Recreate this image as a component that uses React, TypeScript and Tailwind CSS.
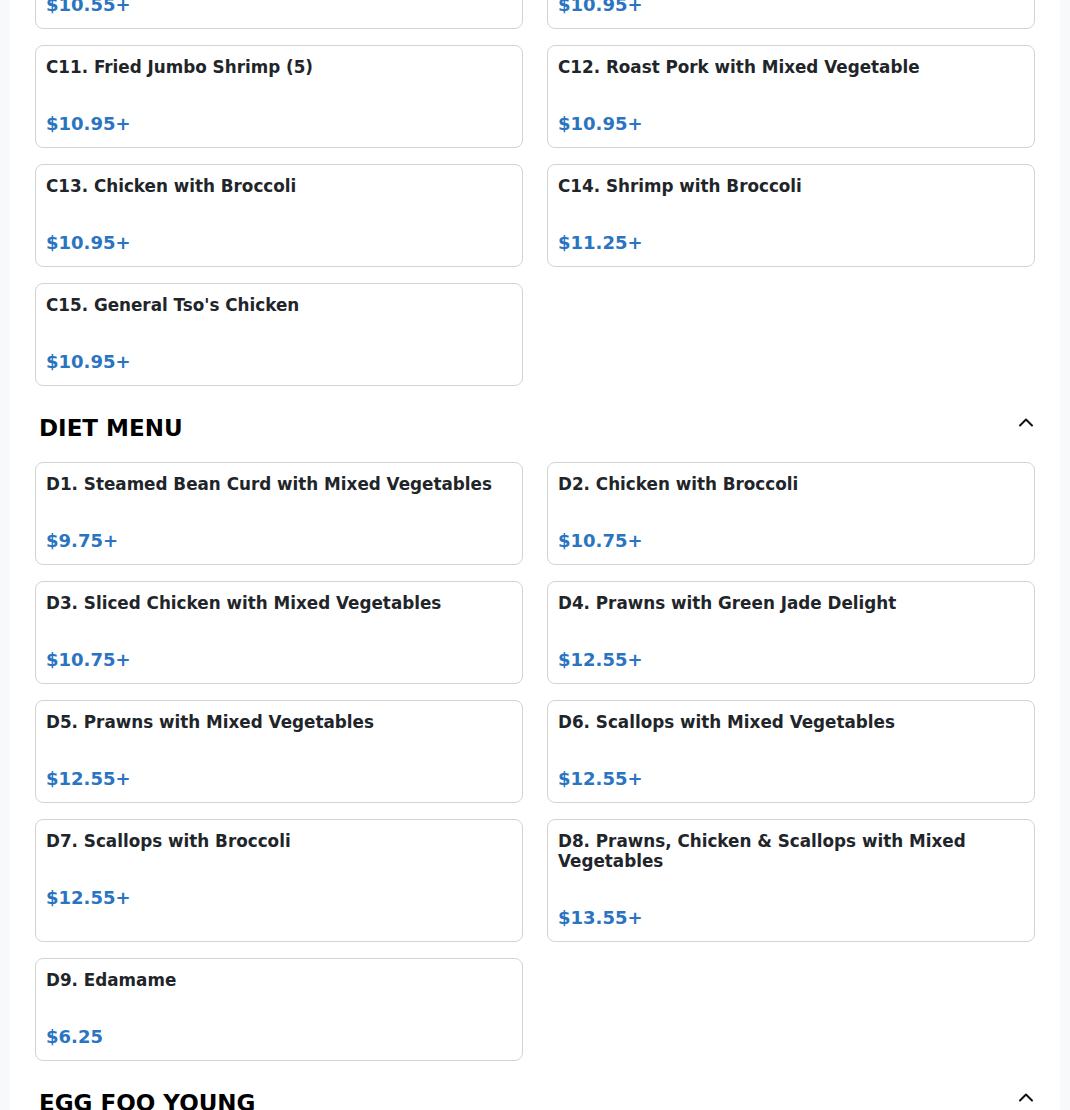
import { Fragment } from "react";

type Item = { name: string; price: string };
type Section = { title: string; items: Item[] };

const sections: Section[] = [
  {
    title: "CHEF'S SPECIALTIES",
    items: [
      { name: "C9. Sesame Chicken", price: "$10.55+" },
      { name: "C10. Orange Chicken", price: "$10.95+" },
      { name: "C11. Fried Jumbo Shrimp (5)", price: "$10.95+" },
      { name: "C12. Roast Pork with Mixed Vegetable", price: "$10.95+" },
      { name: "C13. Chicken with Broccoli", price: "$10.95+" },
      { name: "C14. Shrimp with Broccoli", price: "$11.25+" },
      { name: "C15. General Tso's Chicken", price: "$10.95+" },
    ],
  },
  {
    title: "DIET MENU",
    items: [
      { name: "D1. Steamed Bean Curd with Mixed Vegetables", price: "$9.75+" },
      { name: "D2. Chicken with Broccoli", price: "$10.75+" },
      { name: "D3. Sliced Chicken with Mixed Vegetables", price: "$10.75+" },
      { name: "D4. Prawns with Green Jade Delight", price: "$12.55+" },
      { name: "D5. Prawns with Mixed Vegetables", price: "$12.55+" },
      { name: "D6. Scallops with Mixed Vegetables", price: "$12.55+" },
      { name: "D7. Scallops with Broccoli", price: "$12.55+" },
      { name: "D8. Prawns, Chicken & Scallops with Mixed Vegetables", price: "$13.55+" },
      { name: "D9. Edamame", price: "$6.25" },
    ],
  },
  {
    title: "EGG FOO YOUNG",
    items: [
      { name: "E1. Vegetable Egg Foo Young", price: "$9.95" },
      { name: "E2. Chicken Egg Foo Young", price: "$10.45" },
    ],
  },
];

function Chevron() {
  return (
    <svg width="16" height="10" viewBox="0 0 16 10" fill="none" aria-hidden className="-mr-[3px] mt-[2px] shrink-0 self-start">
      <path d="M2 8.5 L8 2.5 L14 8.5" stroke="#111" strokeWidth="2" strokeLinecap="round" strokeLinejoin="round" />
    </svg>
  );
}

function SectionHeader({ title }: { title: string }) {
  return (
    <div className="mb-[21px] mt-[29px] flex h-[26px] items-center justify-between px-1">
      <h2 className="text-[23px] font-bold leading-[26px] text-black">{title}</h2>
      <Chevron />
    </div>
  );
}

function ItemCard({ item }: { item: Item }) {
  return (
    <div className="flex flex-col rounded-lg border border-[#d3d3d3] bg-white px-[10px] pb-[10px] pt-[11px]">
      <div className="text-[16.8px] font-bold leading-[20px] text-[#212529]">{item.name}</div>
      <div className="mt-[33px] text-[18px] font-bold leading-[27px] text-[#2a74c1]">{item.price}</div>
    </div>
  );
}

export default function App() {
  return (
    <div className="min-h-screen overflow-hidden bg-[#f8f9fa] px-[10px] font-['DejaVu_Sans',sans-serif]">
      <div className="min-h-[1110px] bg-white px-[25px]">
        <div className="-mt-[74px]">
          {sections.map((section, index) => (
            <Fragment key={section.title}>
              {index > 0 && <SectionHeader title={section.title} />}
              <div className="grid grid-cols-2 gap-x-[24px] gap-y-[16px]">
                {section.items.map((item) => (
                  <ItemCard key={item.name} item={item} />
                ))}
              </div>
            </Fragment>
          ))}
        </div>
      </div>
    </div>
  );
}
